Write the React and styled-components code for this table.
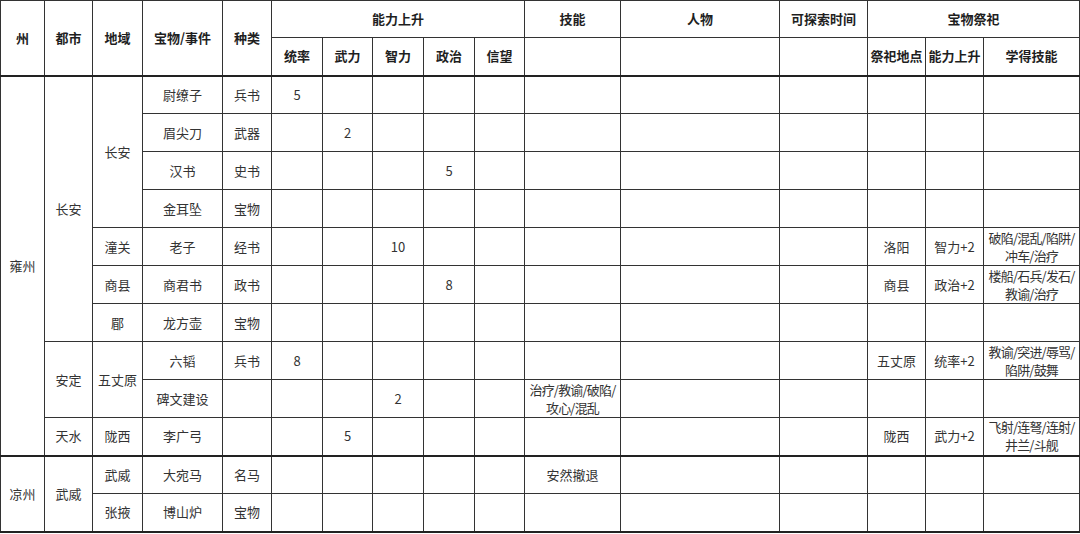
import React from "react";
import styled, { createGlobalStyle } from "styled-components";

const GlobalStyle = createGlobalStyle`
  html, body {
    margin: 0;
    padding: 0;
    background: #ffffff;
  }
  body {
    font-family: "Noto Sans CJK SC", "Noto Sans", "Liberation Sans", sans-serif;
  }
`;

const Sheet = styled.table`
  width: 1079px;
  table-layout: fixed;
  border-collapse: collapse;
  border: 1px solid #333;
  font-size: 13px;
  color: #333;
`;

const Head = styled.thead`
  border-bottom: 2px solid #222;
`;

const Group = styled.tbody`
  border-bottom: 2px solid #222;
`;

const Row = styled.tr`
  height: ${(p) => p.$h || 38}px;
`;

const HeadCell = styled.th`
  border: 1px solid #333;
  padding: 0 1px;
  font-weight: bold;
  color: #1f1f1f;
  text-align: center;
  vertical-align: middle;
  white-space: nowrap;
  font-size: 13px;
  line-height: 16px;
`;

const Cell = styled.td`
  border: 1px solid #333;
  padding: 0 1px;
  text-align: center;
  vertical-align: middle;
  line-height: ${(p) => (p.$wrap ? "18px" : "16px")};
  letter-spacing: ${(p) => (p.$wrap ? "-0.8px" : "0")};
  white-space: nowrap;
  overflow: hidden;
`;

const widths = [44, 48, 50, 80, 49, 51, 50, 51, 51, 50, 96, 159, 88, 58, 58, 96];

const Blank = ({ n }) =>
  Array.from({ length: n }).map((_, i) => <Cell key={i} />);

// 两行文字，按原表的断行位置
const Lines = ({ a, b }) => (
  <Cell $wrap>
    {a}
    <br />
    {b}
  </Cell>
);

export default function App() {
  return (
    <>
      <GlobalStyle />
      <Sheet>
        <colgroup>
          {widths.map((w, i) => (
            <col key={i} style={{ width: w }} />
          ))}
        </colgroup>
        <Head>
          <Row $h={37}>
            <HeadCell rowSpan={2}>州</HeadCell>
            <HeadCell rowSpan={2}>都市</HeadCell>
            <HeadCell rowSpan={2}>地域</HeadCell>
            <HeadCell rowSpan={2}>宝物/事件</HeadCell>
            <HeadCell rowSpan={2}>种类</HeadCell>
            <HeadCell colSpan={5}>能力上升</HeadCell>
            <HeadCell>技能</HeadCell>
            <HeadCell>人物</HeadCell>
            <HeadCell>可探索时间</HeadCell>
            <HeadCell colSpan={3}>宝物祭祀</HeadCell>
          </Row>
          <Row $h={38}>
            <HeadCell>统率</HeadCell>
            <HeadCell>武力</HeadCell>
            <HeadCell>智力</HeadCell>
            <HeadCell>政治</HeadCell>
            <HeadCell>信望</HeadCell>
            <HeadCell />
            <HeadCell />
            <HeadCell />
            <HeadCell>祭祀地点</HeadCell>
            <HeadCell>能力上升</HeadCell>
            <HeadCell>学得技能</HeadCell>
          </Row>
        </Head>
        <Group>
          <Row>
            <Cell rowSpan={10}>雍州</Cell>
            <Cell rowSpan={7}>长安</Cell>
            <Cell rowSpan={4}>长安</Cell>
            <Cell>尉缭子</Cell>
            <Cell>兵书</Cell>
            <Cell>5</Cell>
            <Blank n={10} />
          </Row>
          <Row>
            <Cell>眉尖刀</Cell>
            <Cell>武器</Cell>
            <Cell />
            <Cell>2</Cell>
            <Blank n={9} />
          </Row>
          <Row>
            <Cell>汉书</Cell>
            <Cell>史书</Cell>
            <Blank n={3} />
            <Cell>5</Cell>
            <Blank n={7} />
          </Row>
          <Row>
            <Cell>金耳坠</Cell>
            <Cell>宝物</Cell>
            <Blank n={11} />
          </Row>
          <Row>
            <Cell>潼关</Cell>
            <Cell>老子</Cell>
            <Cell>经书</Cell>
            <Blank n={2} />
            <Cell>10</Cell>
            <Blank n={5} />
            <Cell>洛阳</Cell>
            <Cell>智力+2</Cell>
            <Lines a="破陷/混乱/陷阱/" b="冲车/治疗" />
          </Row>
          <Row>
            <Cell>商县</Cell>
            <Cell>商君书</Cell>
            <Cell>政书</Cell>
            <Blank n={3} />
            <Cell>8</Cell>
            <Blank n={4} />
            <Cell>商县</Cell>
            <Cell>政治+2</Cell>
            <Lines a="楼船/石兵/发石/" b="教谕/治疗" />
          </Row>
          <Row>
            <Cell>郿</Cell>
            <Cell>龙方壶</Cell>
            <Cell>宝物</Cell>
            <Blank n={11} />
          </Row>
          <Row>
            <Cell rowSpan={2}>安定</Cell>
            <Cell rowSpan={2}>五丈原</Cell>
            <Cell>六韬</Cell>
            <Cell>兵书</Cell>
            <Cell>8</Cell>
            <Blank n={7} />
            <Cell>五丈原</Cell>
            <Cell>统率+2</Cell>
            <Lines a="教谕/突进/辱骂/" b="陷阱/鼓舞" />
          </Row>
          <Row>
            <Cell>碑文建设</Cell>
            <Cell />
            <Blank n={2} />
            <Cell>2</Cell>
            <Blank n={2} />
            <Lines a="治疗/教谕/破陷/" b="攻心/混乱" />
            <Blank n={5} />
          </Row>
          <Row>
            <Cell>天水</Cell>
            <Cell>陇西</Cell>
            <Cell>李广弓</Cell>
            <Cell />
            <Cell />
            <Cell>5</Cell>
            <Blank n={6} />
            <Cell>陇西</Cell>
            <Cell>武力+2</Cell>
            <Lines a="飞射/连弩/连射/" b="井兰/斗舰" />
          </Row>
        </Group>
        <Group>
          <Row>
            <Cell rowSpan={2}>凉州</Cell>
            <Cell rowSpan={2}>武威</Cell>
            <Cell>武威</Cell>
            <Cell>大宛马</Cell>
            <Cell>名马</Cell>
            <Blank n={5} />
            <Cell>安然撤退</Cell>
            <Blank n={5} />
          </Row>
          <Row>
            <Cell>张掖</Cell>
            <Cell>博山炉</Cell>
            <Cell>宝物</Cell>
            <Blank n={11} />
          </Row>
        </Group>
      </Sheet>
    </>
  );
}
